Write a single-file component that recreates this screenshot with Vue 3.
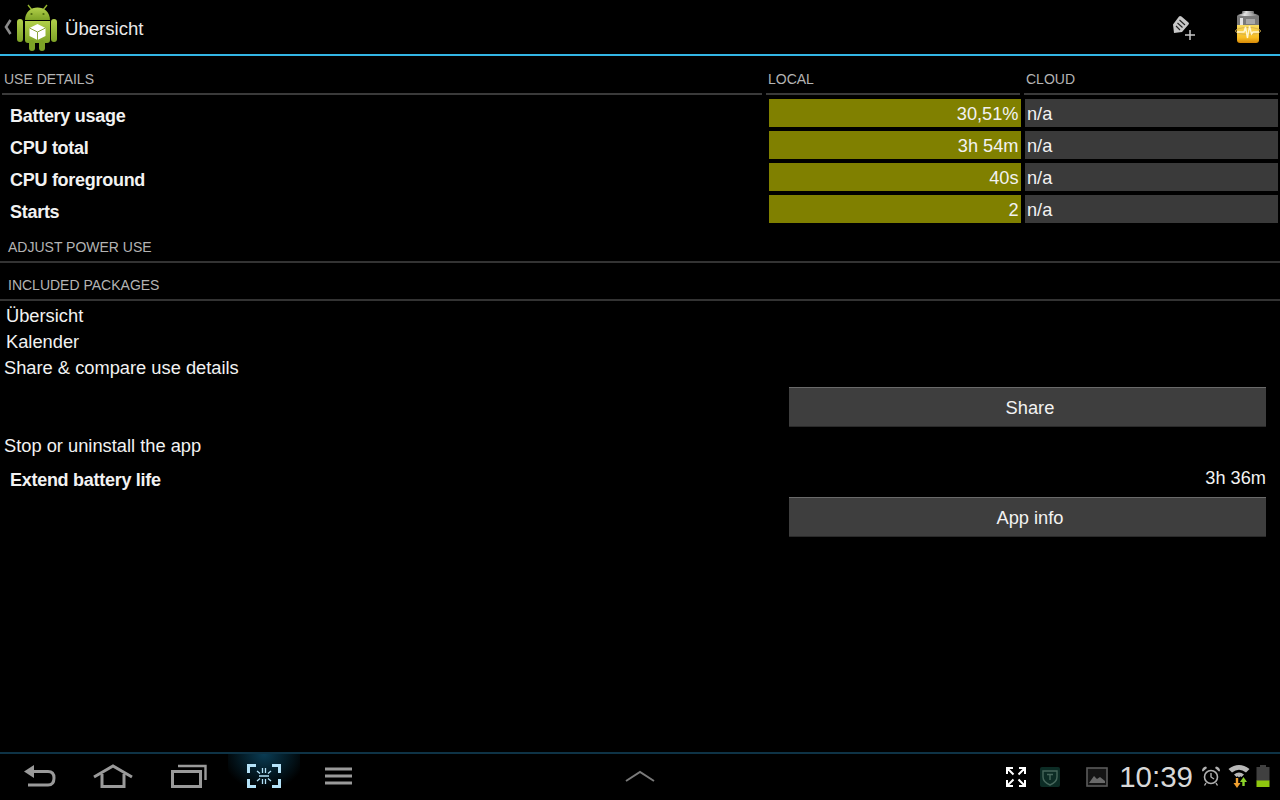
<script setup>
const rows = [
  { label: 'Battery usage', local: '30,51%', cloud: 'n/a' },
  { label: 'CPU total', local: '3h 54m', cloud: 'n/a' },
  { label: 'CPU foreground', local: '40s', cloud: 'n/a' },
  { label: 'Starts', local: '2', cloud: 'n/a' },
]
</script>

<template>
  <div class="screen">
    <header class="actionbar">
      <span class="chev">
        <svg width="8" height="16" viewBox="0 0 8 16"><path d="M6.5 1 L2 8 L6.5 15" fill="none" stroke="#8a8a8a" stroke-width="2.6"/></svg>
      </span>
      <svg class="logo" width="40" height="48" viewBox="0 0 40 48">
        <defs>
          <linearGradient id="g" x1="0" y1="0" x2="0" y2="1"><stop offset="0" stop-color="#b2d04a"/><stop offset="1" stop-color="#7ea326"/></linearGradient>
        </defs>
        <path d="M11 1 L15 6 M30 1 L26 6" stroke="#93b22e" stroke-width="1.4"/>
        <path d="M8 16 C8 8 14 3.500 20.500 3.500 C27 3.500 33 8 33 16 Z" fill="url(#g)"/>
        <circle cx="14.500" cy="10" r="1.100" fill="#4d6b10"/><circle cx="26.500" cy="10" r="1.100" fill="#4d6b10"/>
        <rect x="0" y="15" width="6" height="23" rx="3" fill="url(#g)"/>
        <rect x="34" y="15" width="6" height="23" rx="3" fill="url(#g)"/>
        <path d="M8 17 H33 V36 Q33 39 30 39 H11 Q8 39 8 36 Z" fill="url(#g)"/>
        <rect x="12" y="36" width="6" height="11" rx="3" fill="#7ca126"/>
        <rect x="22" y="36" width="6" height="11" rx="3" fill="#7ca126"/>
        <path d="M20.500 20 L28.500 24 V32 L20.500 36 L12.500 32 V24 Z" fill="#fff"/>
        <path d="M12.500 24 L20.500 28 L28.500 24 M20.500 28 V36" fill="none" stroke="#8ba33c" stroke-width="1"/>
      </svg>
      <span class="title">Übersicht</span>
      <span class="spacer"></span>
      <svg class="act-pen" width="24" height="26" viewBox="0 0 24 26">
        <path d="M7 1.500 Q8 0.500 9.500 1.500 L16.500 7.500 Q17.500 8.500 16.500 9.500 L10 17 L2 18 L1 9.500 Z" fill="#c8c8c8"/>
        <path d="M7.500 5 L13 10 M5.500 8 L10.500 12.500 M4 11 L8 15" stroke="#222" stroke-width="1.100"/>
        <path d="M18 15 V25 M13 20 H23" stroke="#c8c8c8" stroke-width="1.500"/>
      </svg>
      <svg class="act-bat" width="26" height="33" viewBox="0 0 26 33">
        <defs>
          <linearGradient id="y" x1="0" y1="0" x2="0" y2="1"><stop offset="0" stop-color="#f9dc60"/><stop offset="0.7" stop-color="#f7bd22"/><stop offset="1" stop-color="#d88a08"/></linearGradient>
          <linearGradient id="m" x1="0" y1="0" x2="1" y2="0"><stop offset="0" stop-color="#6a6a6a"/><stop offset="0.35" stop-color="#e4e4e4"/><stop offset="1" stop-color="#6a6a6a"/></linearGradient>
        </defs>
        <rect x="7" y="0" width="12" height="3" rx="1" fill="url(#m)"/>
        <ellipse cx="13" cy="5" rx="11" ry="3" fill="url(#m)"/>
        <path d="M2 5 H24 V15 H2 Z" fill="#7a7a7a"/>
        <rect x="5" y="7" width="3" height="8" fill="#e4e4e4"/>
        <rect x="11" y="8" width="9" height="5" fill="#a8a8a8"/>
        <path d="M2 14 H24 V29 Q24 32 21 32 H5 Q2 32 2 29 Z" fill="url(#y)"/>
        <ellipse cx="13" cy="20" rx="12.500" ry="3.500" fill="none" stroke="#d8b24a" stroke-width="1"/>
        <path d="M2 21 H9 L10.500 16 L12.500 27 L14.500 15 L16.500 23 L18 21 H24" fill="none" stroke="#fff6cf" stroke-width="1.400"/>
      </svg>
    </header>

    <main class="content">
      <div class="grid-head">
        <div class="head">USE DETAILS</div>
        <div class="head">LOCAL</div>
        <div class="head">CLOUD</div>
      </div>
      <div class="rows">
        <div v-for="r in rows" :key="r.label" class="row">
          <div class="label">{{ r.label }}</div>
          <div class="bar local">{{ r.local }}</div>
          <div class="bar cloud">{{ r.cloud }}</div>
        </div>
      </div>

      <div class="section">ADJUST POWER USE</div>
      <div class="section second">INCLUDED PACKAGES</div>
      <div class="pkgs">
        <div class="pkg">Übersicht</div>
        <div class="pkg">Kalender</div>
      </div>
      <div class="plain">Share &amp; compare use details</div>
      <div class="btn-row"><button class="btn">Share</button></div>
      <div class="plain stop">Stop or uninstall the app</div>
      <div class="extend">
        <span class="label">Extend battery life</span>
        <span class="time">3h 36m</span>
      </div>
      <div class="btn-row info"><button class="btn">App info</button></div>
    </main>

    <footer class="navbar">
      <svg class="n back" width="32" height="22" viewBox="0 0 32 22">
        <path d="M0 6.500 L10 0 V13 Z" fill="#9a9a9a"/>
        <path d="M9 6.500 H24 Q30 6.500 30 13 Q30 20 24 20 H4" fill="none" stroke="#9a9a9a" stroke-width="3"/>
      </svg>
      <svg class="n home" width="40" height="24" viewBox="0 0 40 24">
        <path d="M1 13 L20 2 L39 13" fill="none" stroke="#9a9a9a" stroke-width="3"/>
        <path d="M9 10 V22.500 H31 V10" fill="none" stroke="#9a9a9a" stroke-width="3"/>
      </svg>
      <svg class="n recent" width="36" height="24" viewBox="0 0 36 24">
        <rect x="1.500" y="7.500" width="28" height="15" fill="none" stroke="#9a9a9a" stroke-width="3"/>
        <path d="M7 2 H34.500 V16" fill="none" stroke="#9a9a9a" stroke-width="2.400"/>
      </svg>
      <div class="n shot">
        <svg width="34" height="24" viewBox="0 0 34 24">
          <path d="M9 1.500 H1.500 V9 M25 1.500 H32.500 V9 M1.500 15 V22.500 H9 M32.500 15 V22.500 H25" fill="none" stroke="#b4e2f8" stroke-width="3"/>
          <path d="M15.500 4 V9 M18.500 4 V9 M15.500 15 V20 M18.500 15 V20 M12 12 H22 M10 7 L13 9.500 M24 7 L21 9.500 M10 17 L13 14.500 M24 17 L21 14.500" stroke="#b4e2f8" stroke-width="1.300"/>
        </svg>
      </div>
      <svg class="n menu" width="27" height="18" viewBox="0 0 27 18">
        <path d="M0 2 H27 M0 9 H27 M0 16 H27" stroke="#9a9a9a" stroke-width="3"/>
      </svg>
      <svg class="up" width="30" height="12" viewBox="0 0 30 12">
        <path d="M1 11 L15 2 L29 11" fill="none" stroke="#7a7a7a" stroke-width="2"/>
      </svg>
      <span class="spacer"></span>
      <svg class="expand" width="20" height="20" viewBox="0 0 20 20">
        <path d="M7 1 H1 V7 M13 1 H19 V7 M1 13 V19 H7 M19 13 V19 H13 M2 2 L7.500 7.500 M18 2 L12.500 7.500 M2 18 L7.500 12.500 M18 18 L12.500 12.500" fill="none" stroke="#fff" stroke-width="2"/>
      </svg>
      <svg class="shield" width="20" height="20" viewBox="0 0 20 20">
        <rect width="20" height="20" rx="2" fill="#0c2c25"/>
        <path d="M3 4 H17 V10 Q17 15 10 18 Q3 15 3 10 Z" fill="none" stroke="#46665b" stroke-width="1.400"/>
        <path d="M7 7.500 H13 M10 7.500 V13" stroke="#46665b" stroke-width="1.400"/>
      </svg>
      <svg class="pic" width="22" height="20" viewBox="0 0 22 20">
        <rect x="1" y="1" width="20" height="18" fill="#141414" stroke="#5a5a5a" stroke-width="1.600"/>
        <path d="M3 16 L8 9 L11 12 L14 10 L19 14 V16 Z" fill="#6a6a6a"/>
      </svg>
      <span class="clock">10:39</span>
      <svg class="alarm" width="20" height="20" viewBox="0 0 20 20">
        <circle cx="10" cy="11" r="6.500" fill="none" stroke="#b0b0b0" stroke-width="1.600"/>
        <path d="M10 7 V11 L13 13 M5 17 L3.500 19.500 M15 17 L16.500 19.500" fill="none" stroke="#b0b0b0" stroke-width="1.400"/>
        <path d="M1 5 Q1 1 5 0.500 L6 2 L2 5.500 Z M19 5 Q19 1 15 0.500 L14 2 L18 5.500 Z" fill="#b0b0b0"/>
      </svg>
      <svg class="wifi" width="22" height="24" viewBox="0 0 22 24">
        <path d="M0.500 5 Q11 -3 21.500 5 L18 8.500 Q11 3 4 8.500 Z" fill="#b8b8b8"/>
        <path d="M6 10.500 Q11 6.500 16 10.500 L13.500 13 Q11 11 8.500 13 Z" fill="#b8b8b8"/>
        <path d="M11 13.500 L9.500 12 Q11 11.500 12.500 12 Z" fill="#b8b8b8"/>
        <path d="M9 14 V20" stroke="#f0a030" stroke-width="2.400"/>
        <path d="M5.500 19 H12.500 L9 24 Z" fill="#f0a030"/>
        <path d="M15.500 22 V17" stroke="#8cd42a" stroke-width="2.400"/>
        <path d="M12 18 H19 L15.500 13 Z" fill="#8cd42a"/>
      </svg>
      <svg class="battery" width="14" height="22" viewBox="0 0 14 22">
        <rect x="4" y="0" width="6" height="2" fill="#404040"/>
        <rect x="0.500" y="2" width="13" height="14" fill="#404040"/>
        <rect x="0.500" y="15.500" width="13" height="6.500" fill="#8fc70f"/>
      </svg>
    </footer>
  </div>
</template>

<style>
html, body { margin: 0; background: #000; }
</style>

<style scoped>
.screen {
  width: 1280px;
  height: 800px;
  background: #000;
  color: #f2f2f2;
  font-family: "Liberation Sans", Arial, sans-serif;
  display: flex;
  flex-direction: column;
  overflow: hidden;
}
.actionbar {
  height: 54px;
  flex: none;
  border-bottom: 2px solid #33b5e5;
  display: flex;
  align-items: center;
  box-sizing: content-box;
}
.chev { width: 8px; margin-left: 4px; display: flex; }
.logo { margin-left: 5px; margin-top: 2px; }
.title { margin-left: 8px; margin-top: 4px; font-size: 18.600px; color: #e8e8e8; }
.spacer { flex: 1; }
.act-pen { margin-right: 39px; margin-top: 2px; }
.act-bat { margin-right: 19px; margin-top: 1px; }

.content { flex: 1; min-height: 0; }

.grid-head {
  display: grid;
  grid-template-columns: 760px 254px 254px;
  column-gap: 4px;
  padding: 14px 2px 0;
}
.head {
  font-size: 14px;
  line-height: 16px;
  height: 25px;
  padding: 1px 0 0 2px;
  box-sizing: border-box;
  border-bottom: 2px solid #3a3a3a;
  color: #b4b4b4;
}
.rows {
  display: flex;
  flex-direction: column;
  gap: 4px;
  padding-top: 4px;
}
.row {
  display: grid;
  grid-template-columns: 765px 252px 253px;
  column-gap: 4px;
  height: 28px;
}
.label {
  font-size: 18px;
  font-weight: 700;
  letter-spacing: -0.280px;
  line-height: 34px;
  padding-left: 10px;
  color: #f2f2f2;
}
.bar {
  font-size: 18.200px;
  line-height: 30px;
  height: 28px;
}
.local {
  background: #808000;
  text-align: right;
  padding-right: 2.500px;
}
.cloud { background: #3a3a3a; padding-left: 2px; }
.section {
  font-size: 14px;
  line-height: 16px;
  padding: 16px 0 0 8px;
  height: 22px;
  border-bottom: 2px solid #333;
  color: #b4b4b4;
}
.second { padding-top: 14px; }
.pkgs { padding-top: 2px; }
.pkg {
  font-size: 18.300px;
  line-height: 26px;
  padding-left: 6px;
  color: #f2f2f2;
}
.plain {
  font-size: 18.300px;
  line-height: 26px;
  padding-left: 4px;
  color: #f2f2f2;
}
.btn-row {
  display: flex;
  justify-content: flex-end;
  padding: 6px 14px 0 0;
}
.btn {
  width: 477px;
  height: 40px;
  background: #3e3e3e;
  border: 0;
  border-top: 1px solid #6a6a6a;
  border-bottom: 1px solid #2a2a2a;
  color: #f2f2f2;
  font: 18.300px "Liberation Sans", Arial, sans-serif;
  padding: 2px 0 0 5px;
}
.stop { margin-top: 6px; }
.extend {
  display: flex;
  justify-content: space-between;
  height: 34px;
  margin-top: 4px;
}
.time { font-size: 18.200px; line-height: 30px; padding-right: 14px; color: #f2f2f2; }
.info { padding-top: 0; }

.navbar {
  height: 46px;
  box-sizing: border-box;
  height: 48px;
  flex: none;
  border-top: 2px solid #0e3346;
  padding-bottom: 2px;
  display: flex;
  align-items: center;
  position: relative;
  background: #000;
}
.back { margin-left: 24px; }
.home { margin-left: 37px; }
.recent { margin-left: 38px; }
.shot {
  margin-left: 21px;
  width: 72px;
  height: 44px;
  margin-bottom: -2px;
  padding-bottom: 2px;
  display: flex;
  align-items: center;
  justify-content: center;
  background: radial-gradient(ellipse 42px 36px at 50% 0, #0a3c54 0, #041e2a 50%, #000 100%);
}
.menu { margin-left: 25px; }
.up { position: absolute; left: 625px; top: 16px; }
.expand { margin-right: 14px; margin-top: 2px; }
.shield { margin-right: 26px; margin-top: 2px; }
.pic { margin-right: 11px; margin-top: 2px; }
.clock { font-size: 29.500px; color: #d8d8d8; margin-right: 8px; margin-top: 1px; }
.alarm { margin-right: 7px; }
.wifi { margin-right: 6px; }
.battery { margin-right: 10px; }
</style>
